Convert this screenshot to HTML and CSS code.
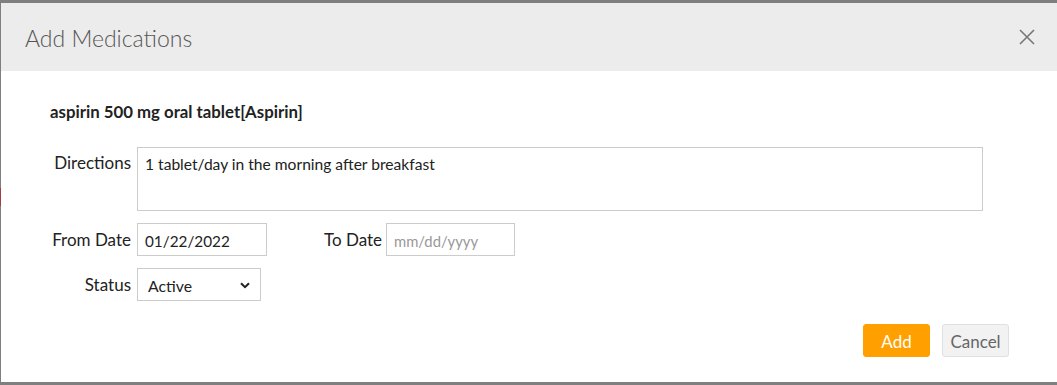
FILE: index.html
```html
<!DOCTYPE html>
<html lang="en">
<head>
    <meta charset="UTF-8">
    <title>Add Medications</title>
    <link rel="stylesheet" href="styles.css">
</head>
<body>
<div class="backdrop-mark"></div>
<div class="modal">
    <div class="modal_header">
        <h4 class="modal_title">Add Medications</h4>
        <button class="modal_close" type="button" aria-label="Close">
            <svg width="16" height="16" viewBox="0 0 16 16">
                <path d="M1 1L15 15M15 1L1 15" stroke="#777" stroke-width="1.6" fill="none"/>
            </svg>
        </button>
    </div>
    <div class="modal_body">
        <p class="drug_name">aspirin 500 mg oral tablet[Aspirin]</p>

        <div class="form_row form_row-top">
            <label class="form_label">Directions</label>
            <textarea class="form_textarea">1 tablet/day in the morning after breakfast</textarea>
        </div>

        <div class="form_row">
            <label class="form_label">From Date</label>
            <input class="form_input" type="text" value="01/22/2022">
            <label class="form_label form_label-to">To Date</label>
            <input class="form_input form_input-to" type="text" placeholder="mm/dd/yyyy">
        </div>

        <div class="form_row">
            <label class="form_label">Status</label>
            <div class="form_select">
                <span>Active</span>
                <svg width="10" height="7" viewBox="0 0 10 7">
                    <path d="M1 1.2L5 5.2L9 1.2" stroke="#222" stroke-width="2" fill="none"/>
                </svg>
            </div>
        </div>
    </div>
    <div class="modal_footer">
        <button class="btn btn-add" type="button">Add</button>
        <button class="btn btn-cancel" type="button">Cancel</button>
    </div>
</div>
</body>
</html>
```

FILE: styles.css
```css
*{margin: 0;padding: 0;box-sizing: border-box;}
body{
    background-color: #7f7f7f;
    padding: 3px 0 0 1px;
    overflow: hidden;
    font-family: Lato, "Liberation Sans", sans-serif;
    color: #222;
}
.backdrop-mark{
    position: absolute;
    left: 0;
    top: 188px;
    width: 1px;
    height: 18px;
    background-color: #a04040;
}
.modal{
    width: 1070px;
    height: 379px;
    background-color: #fff;
    display: flex;
    flex-direction: column;
}
.modal_header{
    height: 68px;
    background-color: #ececec;
    display: flex;
    align-items: center;
    padding: 0 22px 0 24px;
}
.modal_title{
    flex: 1;
    font-size: 23px;
    font-weight: 300;
    color: #555;
    margin-top: 1px;
}
.modal_close{
    border: none;
    background: none;
    width: 16px;
    height: 16px;
    margin-right: 14px;
    display: flex;
}
.modal_body{
    padding: 30px 0 0 49px;
}
.drug_name{
    font-size: 16.8px;
    font-weight: bold;
    line-height: 22px;
    margin-bottom: 24px;
}
.form_row{
    display: flex;
    align-items: center;
    margin-bottom: 12px;
}
.form_row-top{
    align-items: flex-start;
}
.form_label{
    width: 81px;
    text-align: right;
    font-size: 17px;
    margin-right: 6px;
    white-space: nowrap;
}
.form_row-top .form_label{
    padding-top: 5px;
}
.form_textarea{
    width: 846px;
    height: 64px;
    border: 1px solid #ccc;
    padding: 7px 7px;
    font-family: inherit;
    font-size: 15.6px;
    color: #222;
    resize: none;
}
.form_input{
    width: 130px;
    height: 33px;
    border: 1px solid #ccc;
    padding: 2px 7px 0;
    font-family: inherit;
    font-size: 15.3px;
    color: #222;
}
.form_input::placeholder{
    color: #999;
    font-size: 14.8px;
}
.form_label-to{
    width: 56px;
    margin-left: 57px;
    margin-right: 6px;
}
.form_input-to{
    width: 129px;
}
.form_select{
    width: 124px;
    height: 33px;
    border: 1px solid #ccc;
    padding: 2px 10px 0 10px;
    display: flex;
    align-items: center;
    justify-content: space-between;
    font-size: 15.8px;
}
.modal_footer{
    display: flex;
    justify-content: flex-end;
    gap: 12px;
    padding: 11px 62px 0 0;
}
.btn{
    width: 67px;
    height: 33px;
    border-radius: 3px;
    font-family: inherit;
    font-size: 17px;
    padding-top: 1px;
}
.btn-add{
    background-color: #ffa000;
    border: 1px solid #ffa000;
    color: #fff;
}
.btn-cancel{
    background-color: #f2f2f2;
    border: 1px solid #e0e0e0;
    color: #666;
}
```
